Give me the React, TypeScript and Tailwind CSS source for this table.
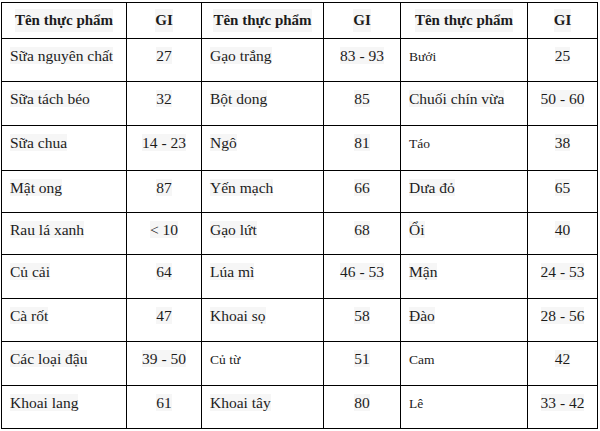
const rows: string[][] = [
  ["Sữa nguyên chất", "27", "Gạo trắng", "83 - 93", "Bưởi", "25"],
  ["Sữa tách béo", "32", "Bột dong", "85", "Chuối chín vừa", "50 - 60"],
  ["Sữa chua", "14 - 23", "Ngô", "81", "Táo", "38"],
  ["Mật ong", "87", "Yến mạch", "66", "Dưa đỏ", "65"],
  ["Rau lá xanh", "< 10", "Gạo lứt", "68", "Ổi", "40"],
  ["Củ cải", "64", "Lúa mì", "46 - 53", "Mận", "24 - 53"],
  ["Cà rốt", "47", "Khoai sọ", "58", "Đào", "28 - 56"],
  ["Các loại đậu", "39 - 50", "Củ từ", "51", "Cam", "42"],
  ["Khoai lang", "61", "Khoai tây", "80", "Lê", "33 - 42"],
];

const small = ["Bưởi", "Táo", "Củ từ", "Cam", "Lê"];

export default function App() {
  return (
    <div className="w-[600px] h-[431px] bg-white pl-px pt-[2px] text-[#1c1c1c]" style={{ fontFamily: '"Liberation Serif", "DejaVu Serif", serif' }}>
      <div className="grid w-[597px] gap-px bg-black p-px grid-cols-[124px_74px_121px_76px_126px_69px] grid-rows-[35px_42px_43px_44px_41px_41px_43px_42px_43px_42px]">
        {[0, 1, 2].flatMap((i) => [
          <div key={"n" + i} className="flex items-center justify-center bg-white text-[15px] font-bold whitespace-nowrap">
            <span className="bg-[#f6f6f6]">Tên thực phẩm</span>
          </div>,
          <div key={"g" + i} className="flex items-center justify-center bg-white text-[15px] font-bold">
            <span className="bg-[#f6f6f6]">GI</span>
          </div>,
        ])}
        {rows.flatMap((r, i) =>
          r.map((c, j) =>
            j % 2 === 0 ? (
              <div key={i + "-" + j} className="bg-white px-[8px] pt-[5px] whitespace-nowrap">
                <span className={small.includes(c) ? "text-[13.5px]" : "text-[15.5px] bg-[#f6f6f6]"}>{c}</span>
              </div>
            ) : (
              <div key={i + "-" + j} className="bg-white pt-[5px] text-center whitespace-nowrap">
                <span className="text-[15.5px] bg-[#f6f6f6]">{c}</span>
              </div>
            )
          )
        )}
      </div>
    </div>
  );
}
